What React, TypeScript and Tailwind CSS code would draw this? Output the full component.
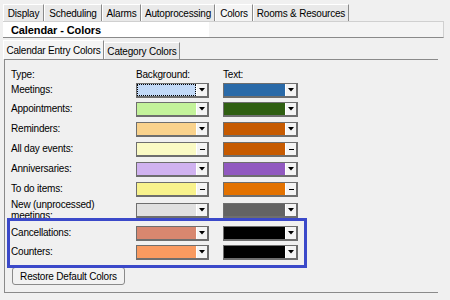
import React from "react";

type Arrow = "tri" | "dash";

function Combo({ color, w, arrow = "tri", focus = false }: { color: string; w: number; arrow?: Arrow; focus?: boolean }) {
  return (
    <div
      className="flex h-[15px] border-t border-l border-b-2 border-r-2 border-[#6e6e6e] bg-white"
      style={{ width: w }}
    >
      <div className={`flex-1 ${focus ? "border border-dotted border-black" : ""}`} style={{ backgroundColor: color }} />
      <div className="w-[11px] flex items-center justify-center bg-[#f4f4f4] border-l border-white">
        {arrow === "tri" ? (
          <svg width="6" height="4" viewBox="0 0 6 4">
            <polygon points="0,0 6,0 3,3.5" fill="#000" />
          </svg>
        ) : (
          <div className="w-[5px] h-[1px] bg-black" />
        )}
      </div>
    </div>
  );
}

const rows: { label: React.ReactNode; bg: string; fg: string; h: number; top?: number; bgArrow?: Arrow; fgArrow?: Arrow; focus?: boolean; bw?: number }[] = [
  { label: "Meetings:", bg: "#c2d9f7", fg: "#2a6aa8", h: 19, focus: true },
  { label: "Appointments:", bg: "#c3f29a", fg: "#2f5f11", h: 20 },
  { label: "Reminders:", bg: "#f9d28c", fg: "#c65a00", h: 20 },
  { label: "All day events:", bg: "#fafac4", fg: "#c65a00", h: 20, bgArrow: "dash", fgArrow: "dash", bw: 73 },
  { label: "Anniversaries:", bg: "#d0b2f0", fg: "#9159c0", h: 20, bw: 73 },
  { label: "To do items:", bg: "#f8f28c", fg: "#e37200", h: 16, bgArrow: "dash", fgArrow: "dash" },
  { label: <>New (unprocessed)<br />meetings:</>, bg: "#e0e0e0", fg: "#636363", h: 28, top: 5 },
  { label: "Cancellations:", bg: "#d8876f", fg: "#000000", h: 19 },
  { label: "Counters:", bg: "#f99a60", fg: "#000000", h: 22 },
];

const topTabs = [
  { t: "Display", w: 41 },
  { t: "Scheduling", w: 58 },
  { t: "Alarms", w: 39 },
  { t: "Autoprocessing", w: 74 },
  { t: "Colors", w: 38, sel: true },
  { t: "Rooms & Resources", w: 96 },
];

export default function App() {
  return (
    <div
      className="relative w-[450px] h-[300px] overflow-hidden bg-[#f0f0f0] text-[10px] tracking-[-0.2px] text-black whitespace-nowrap"
      style={{ fontFamily: '"Liberation Sans", Arial, sans-serif' }}
    >
      {/* top tabs */}
      <div className="flex pl-[3px] pt-[4px] h-[21px]">
        {topTabs.map((t) => (
          <div
            key={t.t}
            className={`h-[17px] flex items-center justify-center leading-[13px] border-t border-l border-white border-r border-r-[#8a8a8a] ${t.sel ? "bg-[#f4f4f4]" : "bg-[#e9e9e9]"}`}
            style={{ width: t.w }}
          >
            {t.t}
          </div>
        ))}
      </div>

      {/* header */}
      <div className="ml-[3px] w-[441px] h-[17px] flex border-t border-[#d0d0d0] border-b border-b-[#8a8a8a] border-r border-r-[#d0d0d0] bg-[#f4f4f4]">
        <div className="w-[206px] bg-white pl-[8px] flex items-center font-bold text-[11px] tracking-[-0.1px] leading-[14px]">Calendar - Colors</div>
      </div>

      {/* inner tabs */}
      <div className="flex pl-[3px] pt-[2px] items-end h-[21px]">
        <div className="w-[101px] h-[19px] flex items-center justify-center bg-[#f4f4f4] border-t border-l border-white border-r border-r-[#8a8a8a] leading-[13px]">
          Calendar Entry Colors
        </div>
        <div className="w-[76px] h-[17px] flex items-center justify-center bg-[#e9e9e9] border-t border-l border-white border-r border-r-[#8a8a8a] leading-[13px]">
          Category Colors
        </div>
      </div>

      {/* panel */}
      <div className="ml-[4px] w-[434px] h-[234px] border-t border-l border-b border-[#8a8a8a] pl-[6px] pt-[8px]">
        <div className="flex h-[15px] leading-[13px]">
          <div className="w-[125px]">Type:</div>
          <div className="w-[87px]">Background:</div>
          <div>Text:</div>
        </div>
        {rows.map((r, i) => (
          <div key={i} className="flex" style={{ height: r.h }}>
            <div className="w-[125px] leading-[11px] pt-[1px] pr-[4px]">
              {r.label}
            </div>
            <div className="w-[87px]" style={{ paddingTop: r.top ?? 0 }}>
              <Combo color={r.bg} w={r.bw ?? 73} arrow={r.bgArrow} focus={r.focus} />
            </div>
            <div style={{ paddingTop: r.top ?? 0 }}>
              <Combo color={r.fg} w={75} arrow={r.fgArrow} />
            </div>
          </div>
        ))}
        <button className="ml-[1px] w-[113px] h-[18px] rounded-[3px] border border-[#8a8a8a] bg-[#f2f2f2] text-[10px] tracking-[-0.2px] leading-[13px]">
          Restore Default Colors
        </button>
      </div>

      {/* annotation */}
      <div className="absolute left-[7px] top-[218px] w-[300px] h-[50px] border-[3px] border-[#3b49c9] pointer-events-none" />
    </div>
  );
}
